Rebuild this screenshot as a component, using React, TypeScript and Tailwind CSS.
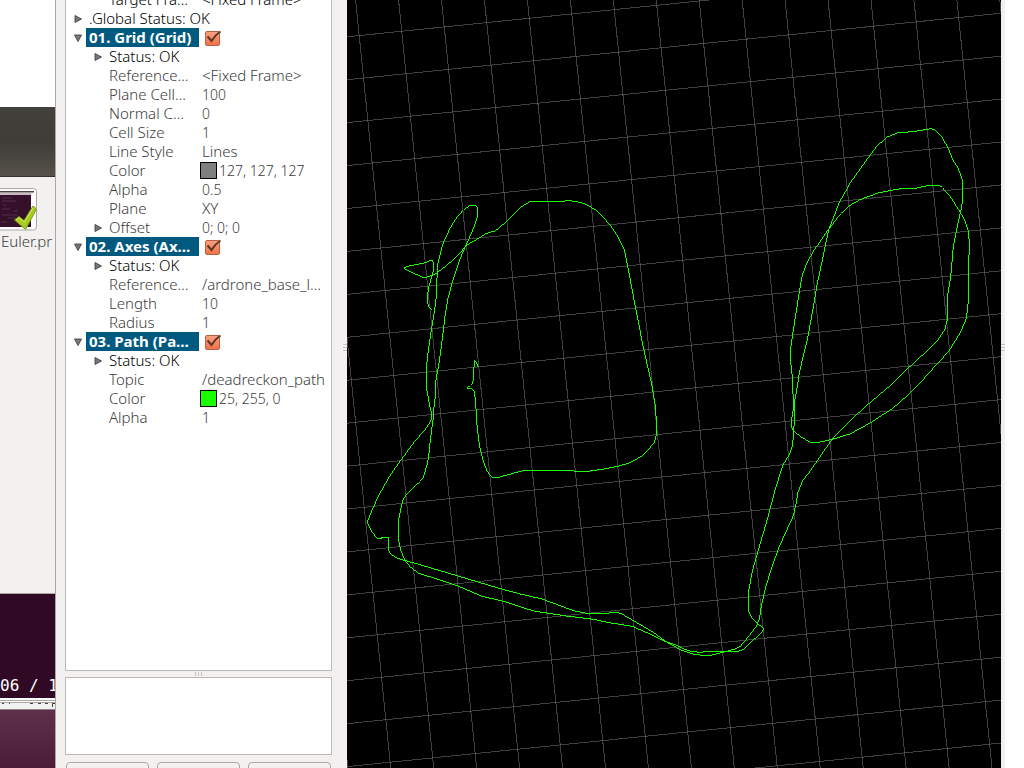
import React, { useState } from "react";

type Row = {
  id: string;
  name: string;
  value?: string;
  level: 0 | 1;
  arrow?: "open" | "closed";
  display?: boolean;
  strong?: boolean;
  swatch?: "gray" | "green";
};

const rows: Row[] = [
  { id: "g-frame", name: "Target Fra…", value: "<Fixed Frame>", level: 1, strong: true },
  { id: "g-status", name: ".Global Status: OK", level: 0, arrow: "closed", strong: true },
  { id: "grid", name: "01. Grid (Grid)", level: 0, arrow: "open", display: true },
  { id: "grid-status", name: "Status: OK", level: 1, arrow: "closed", strong: true },
  { id: "grid-ref", name: "Reference…", value: "<Fixed Frame>", level: 1 },
  { id: "grid-count", name: "Plane Cell…", value: "100", level: 1 },
  { id: "grid-normal", name: "Normal C…", value: "0", level: 1 },
  { id: "grid-size", name: "Cell Size", value: "1", level: 1 },
  { id: "grid-style", name: "Line Style", value: "Lines", level: 1 },
  { id: "grid-color", name: "Color", value: "127, 127, 127", level: 1, swatch: "gray" },
  { id: "grid-alpha", name: "Alpha", value: "0.5", level: 1 },
  { id: "grid-plane", name: "Plane", value: "XY", level: 1 },
  { id: "grid-offset", name: "Offset", value: "0; 0; 0", level: 1, arrow: "closed" },
  { id: "axes", name: "02. Axes (Ax…", level: 0, arrow: "open", display: true },
  { id: "axes-status", name: "Status: OK", level: 1, arrow: "closed", strong: true },
  { id: "axes-ref", name: "Reference…", value: "/ardrone_base_l…", level: 1 },
  { id: "axes-length", name: "Length", value: "10", level: 1 },
  { id: "axes-radius", name: "Radius", value: "1", level: 1 },
  { id: "path", name: "03. Path (Pa…", level: 0, arrow: "open", display: true },
  { id: "path-status", name: "Status: OK", level: 1, arrow: "closed", strong: true },
  { id: "path-topic", name: "Topic", value: "/deadreckon_path", level: 1 },
  { id: "path-color", name: "Color", value: "25, 255, 0", level: 1, swatch: "green" },
  { id: "path-alpha", name: "Alpha", value: "1", level: 1 },
];

// Trajectory samples, three units per viewport pixel.
const tracks = [
  "394,1102 387,1087 383,1081 381,1100 380,1135 376,1150 370,1156 361,1164 375,1166 382,1175 385,1200 387,1225 390,1275 394,1312 400,1350 410,1387 420,1413 430,1427 437,1432 455,1432 480,1425 525,1413 680,1413 690,1415 717,1415 770,1407 812,1399 850,1388 885,1368 922,1329 929,1300 929,1275 924,1210 914,1152 890,1047 864,915 848,830 840,790 832,750 814,712 787,672 747,630 717,613 690,605 665,602 645,604 551,604 525,619 495,647 470,672 445,693 418,700 385,721 370,728 358,737 345,752 320,778 295,800 265,822 235,833 225,831 175,808 172,803 185,798 235,788 247,782 257,781 260,795 258,815 250,845 244,865 240,905 247,922 255,930",
  "173,1680 160,1648 155,1620 155,1560 162,1525 168,1500 180,1481 220,1444 230,1430 240,1395 245,1370 250,1320 258,1260 260,1230 265,1190 265,1152 275,1095 283,1040 288,1000 295,940 303,895 315,850 325,820 340,775 355,740 370,707 383,675 391,650 392,625 385,616 370,616 350,629 330,651 310,683 290,725 280,760 273,790 269,850 268,890 262,935 253,990 244,1050 239,1095 239,1152 240,1172 248,1217 254,1242 252,1260 240,1282 200,1328 160,1383 130,1425 100,1478 78,1523 68,1548 61,1567 75,1595 90,1615 105,1615 105,1612 125,1612 125,1652 130,1660 145,1672 175,1682 215,1693 330,1727 460,1766 520,1782 585,1797 680,1832 720,1840 780,1840 795,1837 815,1838 830,1845 880,1874 920,1898 960,1927 1000,1949 1041,1963 1066,1966 1096,1965 1131,1956 1161,1948 1181,1938 1206,1908 1229,1877 1237,1857 1243,1817 1256,1762 1271,1712 1296,1642 1339,1547 1346,1517 1353,1477 1366,1444 1391,1411 1446,1331 1456,1317 1511,1260 1561,1215 1634,1153 1681,1107 1731,1061 1771,1022 1793,990 1801,960 1801,890 1811,830 1819,740 1831,680 1844,620 1847,595 1847,545 1841,525 1831,500 1818,480 1806,450 1786,413 1763,390 1751,386 1706,394 1651,399 1621,411 1591,437 1561,477 1511,547 1478,605 1446,687 1436,730 1426,780 1411,850 1401,910 1391,965 1381,1020 1366,1080 1356,1125 1352,1152 1347,1182 1341,1212 1335,1252 1334,1282 1341,1294 1361,1310 1391,1328 1411,1328 1456,1318 1511,1301 1571,1268 1636,1226 1691,1178 1716,1153 1751,1113 1806,1053 1841,996 1858,956 1864,905 1864,790 1868,740 1864,692 1851,656 1836,631 1811,591 1786,563 1779,557 1746,556 1701,566 1656,567 1596,578 1541,598 1511,615 1481,641 1441,693 1401,751 1381,786 1366,825 1358,870 1346,945 1336,1010 1331,1045 1331,1085 1336,1130 1337,1172 1341,1212 1343,1262 1339,1292 1339,1312 1336,1337 1329,1360 1309,1393 1286,1463 1261,1558 1236,1643 1216,1713 1205,1773 1205,1833 1211,1848 1226,1865 1244,1881 1250,1887 1246,1895 1216,1923 1191,1948 1171,1955 1076,1955 1061,1957 1036,1955 1009,1946 985,1934 950,1923 900,1898 855,1879 780,1867 740,1858 650,1847 600,1839 560,1833 470,1804 405,1789 380,1778 330,1757 270,1737 215,1720 190,1701 173,1680",
];

const steps = Array.from({ length: 28 }, (_, i) => i - 3);

function Viewport() {
  return (
    <main className="min-w-0 flex-1 bg-black" aria-label="3D view">
      <svg className="block h-full w-full" viewBox="0 0 654 768" preserveAspectRatio="xMinYMin slice" fill="none" shapeRendering="crispEdges">
        <g stroke="#7f7f7f" strokeOpacity="0.5">
          {steps.map((k) => (
            <line key={`h${k}`} x1={0} y1={36.8 + 42.93 * k} x2={654} y2={36.8 + 42.93 * k - 66.5} />
          ))}
          {steps.map((k) => (
            <line key={`v${k}`} x1={8.6 + 42.95 * k} y1={0} x2={8.6 + 42.95 * k + 78.1} y2={768} />
          ))}
        </g>
        <g transform="scale(0.33333)" stroke="#19ff00" strokeWidth={3}>
          {tracks.map((points, i) => (
            <polyline key={i} points={points} />
          ))}
        </g>
      </svg>
    </main>
  );
}

function Arrow({ open }: { open: boolean }) {
  return (
    <svg className="ml-2 h-2 w-2" viewBox="0 0 8 8">
      <path d={open ? "M0.5 1H7.5L4 7.5Z" : "M1 0.5V7.5L7.5 4Z"} fill="#777" stroke="#444" strokeWidth="0.9" />
    </svg>
  );
}

function Toggle({ label }: { label: string }) {
  const [on, setOn] = useState(true);
  return (
    <span className="relative ml-1 block size-[18px]">
      <input
        type="checkbox"
        aria-label={label}
        checked={on}
        onChange={() => setOn(!on)}
        className="absolute top-0.5 left-0.5 size-[15px] appearance-none rounded-xs border border-[#b8603f] bg-linear-to-b from-[#f9a07e] to-[#f0714a]"
      />
      {on && (
        <svg className="pointer-events-none absolute inset-0 size-[18px]" viewBox="0 0 18 18" fill="none">
          <path d="M4.5 7.5L8.5 12C10.5 8.5 13 5.5 17.5 2.5" stroke="#5b3528" strokeWidth="2" />
        </svg>
      )}
    </span>
  );
}

function TreeRow({ row }: { row: Row }) {
  return (
    <li role="treeitem" className={`flex h-[19px] items-center whitespace-nowrap ${row.strong ? "text-black" : "text-[#3c3c3c]"}`}>
      <div className={`flex h-full w-[133px] shrink-0 items-center ${row.level ? "pl-5" : ""}`}>
        <span className="w-5 shrink-0">{row.arrow && <Arrow open={row.arrow === "open"} />}</span>
        {row.display ? (
          <span className="flex h-full flex-1 items-center bg-[#00597f] pl-[3px] font-bold text-white">{row.name}</span>
        ) : (
          <span className="pl-[3px]">{row.name}</span>
        )}
      </div>
      {row.display && <Toggle label={row.name} />}
      {row.swatch && (
        <span className={`ml-px size-[17px] border border-black ${row.swatch === "gray" ? "bg-[#7f7f7f]" : "bg-[#19ff00]"}`} />
      )}
      {row.value && (
        <span className={`${row.swatch ? "pl-0.5" : "pl-[3px]"} ${/^\d/.test(row.value) ? "text-[14px]" : ""}`}>{row.value}</span>
      )}
    </li>
  );
}

function Background() {
  return (
    <aside className="flex w-[55px] shrink-0 flex-col overflow-hidden bg-[#f2f1f0]">
      <div className="h-[107px] bg-white" />
      <div className="h-[70px] border-b border-[#33322d] bg-linear-to-b from-[#42413c] via-[#3d3c37] to-[#56524a]" />
      <figure className="flex-1 pt-2.5">
        <svg className="block h-[44px] w-[38px]" viewBox="0 0 38 44">
          <rect x="-5" y="1.5" width="41.5" height="41.5" rx="3" fill="#fdfdfd" stroke="#aaa8a5" />
          <rect x="0" y="4" width="34" height="1.5" fill="#4a4540" />
          <rect x="0" y="6" width="31" height="2" fill="#c9b9c4" />
          <rect x="0" y="8" width="31" height="32" fill="#35102b" />
          <path d="M2 11h10M2 14h14M3 18h3M2 22h8M13 24h5M2 28h15M8 31h10M1 35h6" stroke="#65445c" strokeWidth="0.6" />
          <path d="M14.5 33L19 29.5L24 33.5L33 19L36.5 22L25.5 42.5Z" fill="#a6cc22" stroke="#7c9b18" strokeLinejoin="round" />
          <path d="M16 33L19 31L24.5 35L33 21" stroke="#d5ec62" fill="none" />
        </svg>
        <figcaption className="pl-px leading-5 whitespace-nowrap text-[#3c3c3c]">Euler.pr</figcaption>
      </figure>
      <div className="flex h-[105px] items-end overflow-hidden border-t border-[#aaa7a2] bg-[#300a24] pb-0.5 font-['DejaVu_Sans_Mono',monospace] text-base/5 whitespace-pre text-white">
        06 / 1
      </div>
      <div className="h-[5px] border-b border-[#aaa7a2] bg-white pt-0.5">
        <div className="h-px bg-[#aaa7a2]" />
      </div>
      <svg className="block h-[6px] w-full" viewBox="0 0 55 6">
        <path d="M2 0.5h2M9 0.5h1M30 0.5h3M38 0.5h3M45 0.5h3M52 0.5h3M52.5 0v4" stroke="#444" fill="none" />
      </svg>
      <div className="h-[59px] border-t border-[#8f858b] bg-linear-to-b from-[#5e304a] to-[#4b1c38]" />
    </aside>
  );
}

function Displays() {
  return (
    <section className="flex w-[292px] shrink-0 border-l border-[#a9a6a3] bg-[#f2f1f0]" aria-label="Displays">
      <div className="flex min-w-0 flex-1 flex-col pl-[9px]">
        <div className="min-h-0 flex-1 overflow-hidden border border-t-0 border-[#bbb8b5] bg-white">
          <ul role="tree" className="-mt-2.5">
            {rows.map((row) => (
              <TreeRow key={row.id} row={row} />
            ))}
          </ul>
        </div>
        <div className="flex h-1.5 items-center justify-center gap-0.5">
          <span className="h-1 w-px bg-[#c5c2bf]" />
          <span className="h-1 w-px bg-[#c5c2bf]" />
          <span className="h-1 w-px bg-[#c5c2bf]" />
        </div>
        <div className="h-[78px] border border-[#bbb8b5] bg-white" />
        <div className="mt-[7px] flex h-1.5 gap-2 overflow-hidden px-px">
          {["Add", "Remove", "Rename"].map((action) => (
            <button
              key={action}
              aria-label={action}
              className="h-7 flex-1 rounded-sm border border-[#aaa7a5] bg-linear-to-b from-[#f5f4f3] to-[#e0dedc]"
            />
          ))}
        </div>
      </div>
      <div className="flex w-[15px] flex-col items-end justify-center gap-0.5 pb-[73px]">
        <span className="h-px w-1 bg-[#c5c2bf]" />
        <span className="h-px w-1 bg-[#c5c2bf]" />
        <span className="h-px w-1 bg-[#c5c2bf]" />
      </div>
    </section>
  );
}

export default function App() {
  return (
    <div className="flex h-screen overflow-hidden bg-white font-['Noto_Sans',sans-serif] text-[15px] leading-[19px] font-light">
      <Background />
      <Displays />
      <Viewport />
      <div className="flex w-1 shrink-0 flex-col justify-center gap-0.5 bg-[#f0f0f0] pb-[73px]">
        <span className="h-px bg-[#c5c2bf]" />
        <span className="h-px bg-[#c5c2bf]" />
        <span className="h-px bg-[#c5c2bf]" />
      </div>
      <div className="w-[19px] shrink-0 bg-white" />
    </div>
  );
}
